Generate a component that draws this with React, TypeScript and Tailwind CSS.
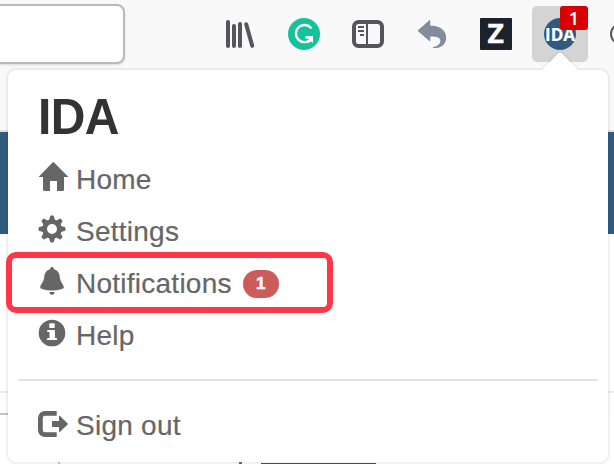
import type { ReactNode } from 'react';

function Library() {
  return (
    <svg className="h-8 w-8 shrink-0" viewBox="0 0 32 32" fill="none" stroke="#565658" strokeWidth="4" strokeLinecap="round">
      <path d="M4 4v24M10 8v20M16 6v22M22.2 6.2l6 21.6" />
    </svg>
  );
}

function Grammar() {
  return (
    <svg className="h-8 w-8 shrink-0" viewBox="0 0 32 32" fill="none">
      <circle cx="16" cy="16" r="16" fill="#15c39a" />
      <path d="M23.4 10.4A8.6 8.6 0 1 0 22.6 21.6" stroke="#fff" strokeWidth="2.4" />
      <path d="M17.5 18H25V25L22.8 23.2L20.4 25.3L19 23.6L21.6 20.7H17.5Z" fill="#fff" />
    </svg>
  );
}

function Sidebar() {
  return (
    <svg className="h-8 w-8 shrink-0" viewBox="0 0 32 32" fill="none" stroke="#565658">
      <rect x="2" y="4" width="28" height="24" rx="4.5" strokeWidth="4" />
      <path d="M15 5v22" strokeWidth="2" />
      <path d="M6 9h6M6 13h6M8 17h4" strokeWidth="2" />
    </svg>
  );
}

function Undo() {
  return (
    <svg className="h-8 w-8 shrink-0" viewBox="0 0 32 32">
      <path d="M2 12.7L13.8 2.3V8C24 8 29.7 12.5 29.7 19.5C29.7 26.5 25 30.2 17 29.5C22.5 28.3 25 25.8 24.7 22.4C24.3 19 20 17.9 13.8 18V23Z" fill="#818d9b" stroke="#6f7d8d" strokeWidth=".7" />
    </svg>
  );
}

function Home() {
  return (
    <svg className="h-8 w-8 overflow-visible" viewBox="0 4 32 32" fill="#666">
      <path d="M14.8 2.2Q15.3 1.7 15.8 2.2L30 16.4Q30.4 17 29.7 17H26V29.5Q26 31 25 31H19V21H12V31H6.5Q5 31 5 29.5V17H1.2Q.5 17 1 16.4Z" />
    </svg>
  );
}

function Cog() {
  return (
    <svg className="h-8 w-8 overflow-visible" viewBox="0 2 32 32" fill="#666">
      <g transform="translate(14 15)">
        <path fillRule="evenodd" d="M-9.8 0A9.8 9.8 0 1 0 9.8 0A9.8 9.8 0 1 0-9.8 0M-5 0A5 5 0 1 1 5 0A5 5 0 1 1-5 0" />
        {[0, 45, 90, 135, 180, 225, 270, 315].map((angle) => (
          <path key={angle} transform={`rotate(${angle})`} d="M-3-8.8L-2-12.6Q-1.8-13.4-.9-13.4H.9Q1.8-13.4 2-12.6L3-8.8Z" />
        ))}
      </g>
    </svg>
  );
}

function Bell() {
  return (
    <svg className="h-8 w-8 overflow-visible" viewBox="0 2 32 32" fill="#666">
      <path d="M14 1Q16 1 16 3.3Q21.2 4.8 21.7 10.5C22.1 16.5 25.8 18.5 25.8 21.2Q25.8 22.4 24 22.9Q19 24.4 14 24.4T4 22.9Q2.2 22.4 2.2 21.2C2.2 18.5 5.9 16.5 6.3 10.5Q6.8 4.8 12 3.3Q12 1 14 1ZM11.5 26.1H16.5Q16.5 28.7 14 28.7T11.5 26.1Z" />
    </svg>
  );
}

function Info() {
  return (
    <svg className="h-8 w-8 overflow-visible" viewBox="0 2 32 32">
      <circle cx="14" cy="15" r="13.3" fill="#666" />
      <path d="M12.2 5.2H15.8Q16.8 5.2 16.8 6.2V9Q16.8 10 15.8 10H12.2Q11.2 10 11.2 9V6.2Q11.2 5.2 12.2 5.2ZM9.5 12H16Q17 12 17 13V20H18.2Q19 20 19 21V22H9V21Q9 20 10 20H11.5V14H10Q9 14 9 13Z" fill="#fff" />
    </svg>
  );
}

function SignOut() {
  return (
    <svg className="h-8 w-8" viewBox="0 0 32 32" fill="#666">
      <path d="M18.7 3.4H7A4.6 4.6 0 0 0 2.4 8V20A4.6 4.6 0 0 0 7 24.6H18.7" fill="none" stroke="#666" strokeWidth="4.8" />
      <path d="M14 11H21V6.8Q21 5.3 22 6.1L29.7 13.4Q30.2 14 29.7 14.6L22 21.8Q21 22.7 21 21.2V17H14Z" />
    </svg>
  );
}

function MenuItem({ icon, label, children }: { icon: ReactNode; label: string; children?: ReactNode }) {
  return (
    <li className="flex h-[52px] items-center pl-[30px] text-[28px] leading-[52px] text-[#666]">
      <span className="mr-[6px] w-8">{icon}</span>
      <span className="tracking-[0.25px] [-webkit-text-stroke:0.2px_#666]">{label}</span>
      {children}
    </li>
  );
}

function Toolbar() {
  return (
    <header className="flex h-[132px] items-start border-b-2 border-[#e0e0e2] bg-[#f9f9f9]">
      <div className="-ml-2 mt-1 h-[60px] w-[133px] shrink-0 rounded-lg border-2 border-[#bababa] bg-white shadow-sm" />
      <div className="ml-[99px] mt-[18px] flex w-[288px] shrink-0 gap-8">
        <Library />
        <Grammar />
        <Sidebar />
        <Undo />
        <div className="flex size-8 shrink-0 items-center justify-center rounded-[1px] bg-[#1b222b] font-['Open_Sans'] text-[27px] font-bold leading-8 text-white">
          <span className="-translate-y-px scale-x-105 [-webkit-text-stroke:0.4px_#fff]">Z</span>
        </div>
      </div>
      <div className="relative ml-5 mt-1.5 flex size-14 shrink-0 items-center justify-center rounded-[5px] bg-[#d4d4d4]">
        <div className="flex size-8 items-center justify-center rounded-full bg-[#315b7e] font-['Open_Sans'] text-[17px] font-bold leading-none text-white">
          <span className="[-webkit-text-stroke:0.2px_#fff]">IDA</span>
        </div>
        <span className="absolute right-0 top-0 flex h-6 w-7 items-center justify-center rounded-[3px] bg-[#d90000] font-['Open_Sans'] text-[18px] font-semibold leading-none text-white">1</span>
      </div>
      <div className="ml-[22px] mt-[23px] size-[22px] shrink-0 rounded-full border-2 border-[#565658]" />
    </header>
  );
}

export default function App() {
  return (
    <div className="relative flex h-[464px] w-[614px] flex-col overflow-hidden bg-white font-['Liberation_Sans',Arial,sans-serif]">
      <Toolbar />
      <div className="h-[102px] shrink-0 bg-[#315b7e]" />
      <div className="h-[157px] shrink-0" />
      <div className="h-[22px] shrink-0 border-t-2 border-[#ececec] bg-[#fdfdfd]" />
      <div className="h-0.5 w-2 shrink-0 bg-[#c2c2c2]" />

      <main className="absolute left-1.5 top-[68px] h-[396px] w-[604px] rounded-[10px] border-2 border-black/[0.055] bg-white bg-clip-padding">
        <h1 className="h-[84px] pl-[30px] pt-[18px] text-[48px] font-bold leading-[58px] tracking-[-0.6px] text-[#333]">
          <span className="inline-block origin-center scale-y-[1.05]">IDA</span>
        </h1>
        <ul>
          <MenuItem icon={<Home />} label="Home" />
          <MenuItem icon={<Cog />} label="Settings" />
          <MenuItem icon={<Bell />} label="Notifications">
            <span className="ml-[11px] flex h-7 w-9 items-center justify-center rounded-full bg-[#cc5c5c] text-[17px] font-bold leading-7 text-white [-webkit-text-stroke:0.5px_#fff]">1</span>
          </MenuItem>
          <MenuItem icon={<Info />} label="Help" />
        </ul>
        <hr className="mx-2.5 mb-[19px] mt-[17px] border-t-2 border-[#e3e3e3]" />
        <ul>
          <MenuItem icon={<SignOut />} label="Sign out" />
        </ul>
      </main>

      <svg className="absolute left-[540px] top-[50px] h-5 w-10" viewBox="0 0 40 20">
        <path d="M2 20L18.5 3Q20 1.5 21.5 3L38 20" fill="#fff" />
        <path d="M1.5 19L19 1.5H21L38.5 19" fill="none" stroke="#000" strokeOpacity=".05" strokeWidth="1.5" />
      </svg>
      <div className="absolute left-1.5 top-[252px] h-[61px] w-[327px] rounded-[10px] border-[6px] border-[#ff3648]" />
      <div className="absolute left-[58px] top-[462px] h-0.5 w-0.5 bg-[#bbb]" />
      <div className="absolute left-[239px] top-[462px] h-0.5 w-[3px] bg-[#666]" />
      <div className="absolute left-[261px] top-[463px] h-px w-[115px] bg-[#35536d]" />
    </div>
  );
}
